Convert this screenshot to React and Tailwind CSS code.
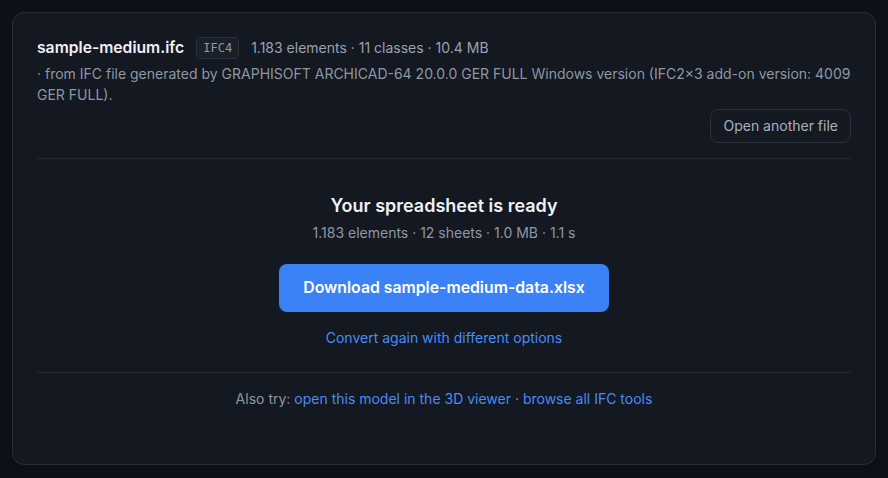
import React from "react";

const App = () => {
  return (
    <div className="min-h-[478px] w-full bg-[#0d1117] p-3 font-['Inter',sans-serif]">
      <div className="rounded-xl border border-[#272e39] bg-[#131821] px-6 pt-6 pb-[55px]">
        {/* file info */}
        <div className="flex items-center">
          <span className="text-[15.7px] leading-[22px] font-semibold text-[#eef1f5]">sample-medium.ifc</span>
          <span className="ml-3 rounded-[4px] border border-[#2a313c] bg-[#1a1f29] px-[6px] py-[1px] font-['DejaVu_Sans_Mono',monospace] text-[12px] leading-[18px] text-[#8f98a6]">
            IFC4
          </span>
          <span className="ml-3 text-sm text-[#9aa2ae]">1.183 elements · 11 classes · 10.4 MB</span>
        </div>
        <p className="mt-[4px] text-sm leading-[21px] text-[#8e97a4]">
          · from IFC file generated by GRAPHISOFT ARCHICAD-64 20.0.0 GER FULL Windows version (IFC2×3 add-on version: 4009 GER FULL).
        </p>
        <div className="mt-[4px] flex justify-end">
          <button className="rounded-lg border border-[#2a313c] bg-[#141922] px-3 py-[6px] text-sm leading-5 text-[#a9b1bd]">
            Open another file
          </button>
        </div>

        <div className="mt-[15px] border-t border-[#252b35]" />

        {/* result */}
        <div className="flex flex-col items-center pt-[33px]">
          <h2 className="text-lg leading-7 font-semibold text-[#eef1f5]">Your spreadsheet is ready</h2>
          <p className="mt-[3px] text-sm leading-5 text-[#8e97a4]">1.183 elements · 12 sheets · 1.0 MB · 1.1 s</p>
          <button className="mt-[21px] h-12 w-[330px] rounded-lg bg-[#3b82f6] text-[15.8px] font-semibold text-white">
            Download sample-medium-data.xlsx
          </button>
          <a className="mt-4 text-sm leading-5 text-[#4b8bf5]">Convert again with different options</a>
        </div>

        <div className="mt-6 border-t border-[#252b35]" />

        <div className="pt-4 text-center text-sm leading-5 text-[#8e97a4]">
          Also try: <a className="text-[#4b8bf5]">open this model in the 3D viewer</a> ·{" "}
          <a className="text-[#4b8bf5]">browse all IFC tools</a>
        </div>
      </div>
    </div>
  );
};

export default App;
